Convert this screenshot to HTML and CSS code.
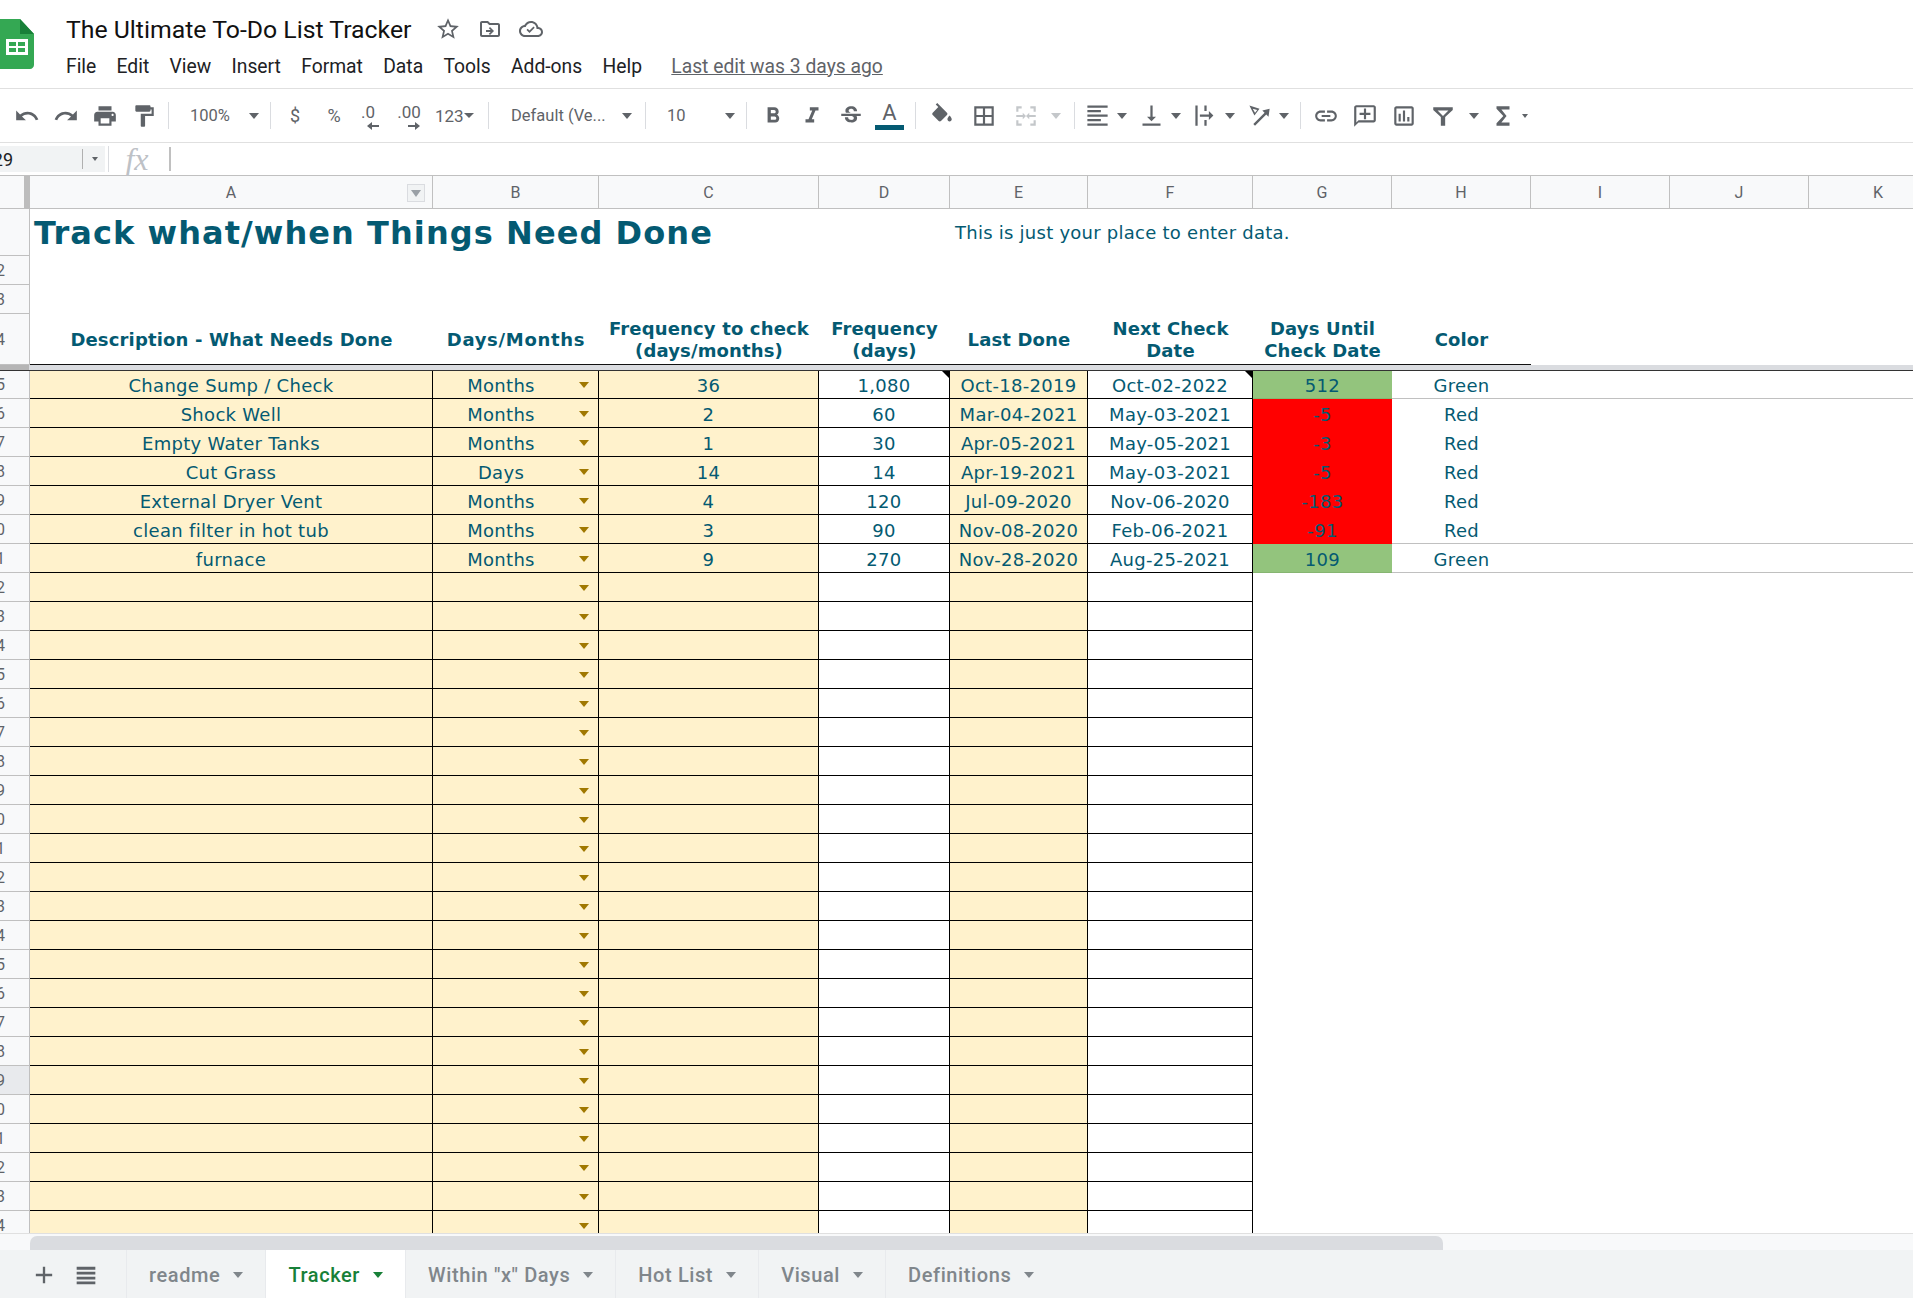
FILE: index.html
```html
<!DOCTYPE html>
<html lang="en">
<head>
    <meta charset="UTF-8">
    <title>The Ultimate To-Do List Tracker</title>
    <link rel="stylesheet" href="styles.css">
</head>
<body>

    <header class="titlebar">
        <svg class="logo" viewBox="14 0 34 50">
            <path fill="#34a853" d="M3 0h31l14 15v31c0 2-2 4-4 4H3c-2 0-3-2-3-4V3c0-2 1-3 3-3z"/>
            <path fill="#188038" d="M34 0l14 15H34z"/>
            <path fill="#fff" d="M20 20h22v16H20z"/>
            <path fill="#34a853" d="M23 23h7v4h-7zM32 23h7v4h-7zM23 29h7v4h-7zM32 29h7v4h-7z"/>
        </svg>
        <div class="doc">
            <div class="doc-name">
                <span class="doc-title">The Ultimate To-Do List Tracker</span>
                <svg class="doc-icon star" viewBox="0 0 24 24"><path d="M22 9.24l-7.19-.62L12 2 9.19 8.63 2 9.24l5.46 4.73L5.82 21 12 17.27 18.18 21l-1.63-7.03L22 9.24zM12 15.4l-3.76 2.27 1-4.28-3.32-2.88 4.38-.38L12 6.1l1.71 4.04 4.38.38-3.32 2.88 1 4.28L12 15.4z"/></svg>
                <svg class="doc-icon" viewBox="0 0 24 24"><path d="M20 6h-8l-2-2H4c-1.1 0-2 .9-2 2v12c0 1.1.9 2 2 2h16c1.1 0 2-.9 2-2V8c0-1.1-.9-2-2-2zm0 12H4V6h5.17l2 2H20v10zM12 18l4-4-4-4-1.2 1.2 1.9 1.9H8v1.8h4.7l-1.9 1.9z"/></svg>
                <svg class="doc-icon" viewBox="0 0 24 24"><path d="M19.35 10.04C18.67 6.59 15.64 4 12 4 9.11 4 6.6 5.64 5.35 8.04 2.34 8.36 0 10.91 0 14c0 3.31 2.69 6 6 6h13c2.76 0 5-2.24 5-5 0-2.64-2.05-4.78-4.65-4.96zM19 18H6c-2.21 0-4-1.79-4-4s1.79-4 4-4h.71C7.37 7.69 9.48 6 12 6c3.04 0 5.5 2.46 5.5 5.5v.5H19c1.66 0 3 1.34 3 3s-1.34 3-3 3zM10.5 16l-3-3 1.2-1.2 1.8 1.8 4-4 1.2 1.2z"/></svg>
            </div>
            <nav class="menu">
                <span>File</span>
                <span>Edit</span>
                <span>View</span>
                <span>Insert</span>
                <span>Format</span>
                <span>Data</span>
                <span>Tools</span>
                <span>Add-ons</span>
                <span>Help</span>
                <a class="last-edit">Last edit was 3 days ago</a>
            </nav>
        </div>
    </header>

    <div class="toolbar">
        <span class="tb"><svg viewBox="0 0 24 24"><path d="M12.5 8c-2.65 0-5.05.99-6.9 2.6L2 7v9h9l-3.62-3.62c1.39-1.16 3.16-1.88 5.12-1.88 3.54 0 6.55 2.31 7.6 5.5l2.37-.78C21.08 11.03 17.15 8 12.5 8z"/></svg></span>
        <span class="tb"><svg viewBox="0 0 24 24"><path d="M18.4 10.6C16.55 8.99 14.15 8 11.5 8c-4.65 0-8.58 3.03-9.96 7.22L3.9 16c1.05-3.19 4.05-5.5 7.6-5.5 1.95 0 3.73.72 5.12 1.88L13 16h9V7l-3.6 3.6z"/></svg></span>
        <span class="tb"><svg viewBox="0 0 24 24"><path d="M19 8H5c-1.66 0-3 1.34-3 3v6h4v4h12v-4h4v-6c0-1.66-1.34-3-3-3zm-3 11H8v-5h8v5zm3-7c-.55 0-1-.45-1-1s.45-1 1-1 1 .45 1 1-.45 1-1 1zm-1-9H6v4h12V3z"/></svg></span>
        <span class="tb"><svg viewBox="0 0 24 24"><path d="M18 4V3c0-.55-.45-1-1-1H5c-.55 0-1 .45-1 1v4c0 .55.45 1 1 1h12c.55 0 1-.45 1-1V6h1v4H9v11c0 .55.45 1 1 1h2c.55 0 1-.45 1-1v-9h8V4h-3z"/></svg></span>
        <i class="sep sep-paint"></i>
        <span class="tb-drop drop-zoom"><span>100%</span><i class="caret"></i></span>
        <i class="sep"></i>
        <span class="tb tb-text w-dollar">$</span>
        <span class="tb tb-text w-percent">%</span>
        <span class="tb tb-dec w-dec0">.0<svg viewBox="0 0 12 8"><path d="M12 3H5V0L0 4l5 4V5h7z"/></svg></span>
        <span class="tb tb-dec w-dec00">.00<svg viewBox="0 0 12 8"><path d="M0 3h7V0l5 4-5 4V5H0z"/></svg></span>
        <span class="tb-drop drop-num"><span>123</span><i class="caret caret-sm"></i></span>
        <i class="sep sep-num"></i>
        <span class="tb-drop drop-font"><span>Default (Ve...</span><i class="caret"></i></span>
        <i class="sep"></i>
        <span class="tb-drop drop-size"><span>10</span><i class="caret"></i></span>
        <i class="sep"></i>
        <span class="tb m-bold"><svg viewBox="0 0 24 24"><path d="M15.6 10.79c.97-.67 1.65-1.77 1.65-2.79 0-2.26-1.75-4-4-4H7v14h7.04c2.09 0 3.71-1.7 3.71-3.79 0-1.52-.86-2.82-2.15-3.42zM10 6.5h3c.83 0 1.5.67 1.5 1.5s-.67 1.5-1.5 1.5h-3v-3zm3.5 9H10v-3h3.5c.83 0 1.5.67 1.5 1.5s-.67 1.5-1.5 1.5z"/></svg></span>
        <span class="tb"><svg viewBox="0 0 24 24"><path d="M10 4v3h2.21l-3.42 8H6v3h8v-3h-2.21l3.42-8H18V4z"/></svg></span>
        <span class="tb"><svg viewBox="0 0 24 24"><path d="M7.24 8.75c-.26-.48-.39-1.03-.39-1.67 0-.61.13-1.16.4-1.67.26-.5.63-.93 1.11-1.29.48-.35 1.05-.63 1.7-.83.66-.19 1.39-.29 2.18-.29.81 0 1.54.11 2.21.34.66.22 1.23.54 1.69.94.47.4.83.88 1.08 1.43.25.55.38 1.15.38 1.81h-3.01c0-.31-.05-.59-.15-.85-.09-.27-.24-.49-.44-.68-.2-.19-.45-.33-.75-.44-.3-.1-.66-.16-1.06-.16-.39 0-.74.04-1.03.13-.29.09-.53.21-.72.36-.19.16-.34.34-.44.55-.1.21-.15.43-.15.66 0 .48.25.88.74 1.21.38.25.77.48 1.41.7H7.39c-.05-.08-.11-.17-.15-.25zM21 12v-2H3v2h9.62c.18.07.4.14.55.2.37.17.66.34.87.51.21.17.35.36.43.57.07.2.11.43.11.69 0 .23-.05.45-.14.66-.09.2-.23.38-.42.53-.19.15-.42.26-.71.35-.29.08-.63.13-1.01.13-.43 0-.83-.04-1.18-.13s-.66-.23-.91-.42c-.25-.19-.45-.44-.59-.75-.14-.31-.25-.76-.25-1.21H6.4c0 .55.08 1.13.24 1.58.16.45.37.85.65 1.21.28.35.6.66.98.92.37.26.78.48 1.22.65.44.17.9.3 1.38.39.48.08.96.13 1.44.13.8 0 1.53-.09 2.18-.28s1.21-.45 1.67-.79c.46-.34.82-.77 1.07-1.27s.38-1.07.38-1.71c0-.6-.1-1.14-.31-1.61-.05-.11-.11-.23-.17-.33H21z"/></svg></span>
        <span class="tb font-color"><span>A</span><i class="color-bar"></i></span>
        <i class="sep sep-color"></i>
        <span class="tb w-42 m-fill"><svg viewBox="0 0 24 24"><path d="M16.56 8.94L7.62 0 6.21 1.41l2.38 2.38-5.15 5.15c-.59.59-.59 1.54 0 2.12l5.5 5.5c.29.29.68.44 1.06.44s.77-.15 1.06-.44l5.5-5.5c.59-.58.59-1.53 0-2.12zM19 11.5s-2 2.17-2 3.5c0 1.1.9 2 2 2s2-.9 2-2c0-1.33-2-3.5-2-3.5z"/></svg></span>
        <span class="tb w-42"><svg viewBox="0 0 24 24"><path d="M3 3v18h18V3H3zm8 16H5v-6h6v6zm0-8H5V5h6v6zm8 8h-6v-6h6v6zm0-8h-6V5h6v6z"/></svg></span>
        <span class="tb w-42 off"><svg viewBox="0 0 24 24"><path d="M3 3h5v2H5v3H3zM16 3h5v5h-2V5h-3zM3 16h2v3h3v2H3zM19 16h2v5h-5v-2h3zM3 11h6V9l3 3-3 3v-2H3zM21 11h-6V9l-3 3 3 3v-2h6z"/></svg></span>
        <span class="caret-box off"><i class="caret"></i></span>
        <i class="sep sep-merge"></i>
        <span class="pair"><svg viewBox="0 0 24 24"><path d="M3 3h18v2H3zM3 7h12v2H3zM3 11h18v2H3zM3 15h12v2H3zM3 19h18v2H3z"/></svg><i class="caret"></i></span>
        <span class="pair"><svg viewBox="0 0 24 24"><path d="M16 13h-3V3h-2v10H8l4 4 4-4zM4 19v2h16v-2H4z"/></svg><i class="caret"></i></span>
        <span class="pair"><svg viewBox="0 0 24 24"><path d="M3 3h2v18H3zM11 3h2v5h-2zM11 16h2v5h-2zM7 11h8V8l4 4-4 4v-3H7z"/></svg><i class="caret"></i></span>
        <span class="pair"><svg viewBox="0 0 24 24"><path d="M3 3l9 3-4.500 6L3 3zm3 3l2 3.500L10 7zM21 6l-1 7-2-2L8 21l-1.500-1.500 10-10-2-2z"/></svg><i class="caret"></i></span>
        <i class="sep sep-merge"></i>
        <span class="tb m-link"><svg viewBox="0 0 24 24"><path d="M3.9 12c0-1.71 1.39-3.1 3.1-3.1h4V7H7c-2.76 0-5 2.24-5 5s2.24 5 5 5h4v-1.9H7c-1.71 0-3.1-1.39-3.1-3.1zM8 13h8v-2H8v2zm9-6h-4v1.9h4c1.71 0 3.1 1.39 3.1 3.1s-1.39 3.1-3.1 3.1h-4V17h4c2.76 0 5-2.24 5-5s-2.24-5-5-5z"/></svg></span>
        <span class="tb"><svg viewBox="0 0 24 24"><path d="M20 2H4c-1.1 0-2 .9-2 2v18l4-4h14c1.1 0 2-.9 2-2V4c0-1.1-.9-2-2-2zm0 14H6l-2 2V4h16v12zM13 5h-2v4H7v2h4v4h2v-4h4V9h-4z"/></svg></span>
        <span class="tb"><svg viewBox="0 0 24 24"><path d="M19 3H5c-1.1 0-2 .9-2 2v14c0 1.1.9 2 2 2h14c1.1 0 2-.9 2-2V5c0-1.1-.9-2-2-2zm0 16H5V5h14v14zM7 10h2v7H7zm4-3h2v10h-2zm4 6h2v4h-2z"/></svg></span>
        <span class="tb"><svg viewBox="0 0 24 24"><path d="M3 4h18v2.500L14 13v8h-4v-8L3 6.500zM7 7l5 5 5-5z" fill-rule="evenodd"/></svg></span>
        <span class="caret-box m-filter"><i class="caret"></i></span>
        <span class="tb"><svg viewBox="0 0 24 24"><path d="M18 3H6v2.200l6.300 6.800L6 18.800V21h12v-3h-7.500l4.800-6-4.800-6H18z"/></svg></span>
        <i class="caret caret-xs"></i>
    </div>

    <div class="formula">
        <div class="name-box"><span class="name-value">29</span><i class="name-div"></i><i class="caret caret-xs"></i></div>
        <i class="fx-sep"></i>
        <span class="fx">fx</span>
        <i class="fx-cursor"></i>
    </div>

    <main class="sheet">
        <div class="row col-heads">
            <div class="corner"></div>
            <div class="ch ch-a">A<i class="filter-btn"><i class="caret caret-xs"></i></i></div>
            <div class="ch">B</div>
            <div class="ch">C</div>
            <div class="ch">D</div>
            <div class="ch">E</div>
            <div class="ch">F</div>
            <div class="ch">G</div>
            <div class="ch">H</div>
            <div class="ch">I</div>
            <div class="ch">J</div>
            <div class="ch">K</div>
        </div>

        <div class="row row-1">
            <div class="rh"></div>
            <div class="title">Track what/when Things Need Done</div>
            <div></div><div></div><div></div>
            <div class="note-text">This is just your place to enter data.</div>
        </div>
        <div class="row row-2"><div class="rh"><span>2</span></div></div>
        <div class="row row-2"><div class="rh"><span>3</span></div></div>
        <div class="row row-4">
            <div class="rh"><span>4</span></div>
            <div class="hd">Description - What Needs Done</div>
            <div class="hd hd-wide">Days/Months</div>
            <div class="hd">Frequency to check<br>(days/months)</div>
            <div class="hd">Frequency<br>(days)</div>
            <div class="hd">Last Done</div>
            <div class="hd">Next Check<br>Date</div>
            <div class="hd">Days Until<br>Check Date</div>
            <div class="hd">Color</div>
        </div>
        <div class="row band"><div class="rh"></div></div>

        <div class="row first line">
            <div class="rh"><span>5</span></div>
            <div class="c y">Change Sump / Check</div>
            <div class="c y dd">Months</div>
            <div class="c y">36</div>
            <div class="c has-note">1,080</div>
            <div class="c y">Oct-18-2019</div>
            <div class="c has-note">Oct-02-2022</div>
            <div class="c good">512</div>
            <div class="c plain"><span>Green</span></div>
        </div>
        <div class="row">
            <div class="rh"><span>6</span></div>
            <div class="c y">Shock Well</div>
            <div class="c y dd">Months</div>
            <div class="c y">2</div>
            <div class="c">60</div>
            <div class="c y">Mar-04-2021</div>
            <div class="c">May-03-2021</div>
            <div class="c bad">-5</div>
            <div class="c plain"><span>Red</span></div>
        </div>
        <div class="row">
            <div class="rh"><span>7</span></div>
            <div class="c y">Empty Water Tanks</div>
            <div class="c y dd">Months</div>
            <div class="c y">1</div>
            <div class="c">30</div>
            <div class="c y">Apr-05-2021</div>
            <div class="c">May-05-2021</div>
            <div class="c bad">-3</div>
            <div class="c plain"><span>Red</span></div>
        </div>
        <div class="row">
            <div class="rh"><span>8</span></div>
            <div class="c y">Cut Grass</div>
            <div class="c y dd">Days</div>
            <div class="c y">14</div>
            <div class="c">14</div>
            <div class="c y">Apr-19-2021</div>
            <div class="c">May-03-2021</div>
            <div class="c bad">-5</div>
            <div class="c plain"><span>Red</span></div>
        </div>
        <div class="row">
            <div class="rh"><span>9</span></div>
            <div class="c y">External Dryer Vent</div>
            <div class="c y dd">Months</div>
            <div class="c y">4</div>
            <div class="c">120</div>
            <div class="c y">Jul-09-2020</div>
            <div class="c">Nov-06-2020</div>
            <div class="c bad">-183</div>
            <div class="c plain"><span>Red</span></div>
        </div>
        <div class="row line">
            <div class="rh"><span>10</span></div>
            <div class="c y">clean filter in hot tub</div>
            <div class="c y dd">Months</div>
            <div class="c y">3</div>
            <div class="c">90</div>
            <div class="c y">Nov-08-2020</div>
            <div class="c">Feb-06-2021</div>
            <div class="c bad">-91</div>
            <div class="c plain"><span>Red</span></div>
        </div>
        <div class="row line">
            <div class="rh"><span>11</span></div>
            <div class="c y">furnace</div>
            <div class="c y dd">Months</div>
            <div class="c y">9</div>
            <div class="c">270</div>
            <div class="c y">Nov-28-2020</div>
            <div class="c">Aug-25-2021</div>
            <div class="c good">109</div>
            <div class="c plain"><span>Green</span></div>
        </div>

        <div class="row"><div class="rh"><span>12</span></div><div class="c y"></div><div class="c y dd"></div><div class="c y"></div><div class="c"></div><div class="c y"></div><div class="c"></div></div>
        <div class="row"><div class="rh"><span>13</span></div><div class="c y"></div><div class="c y dd"></div><div class="c y"></div><div class="c"></div><div class="c y"></div><div class="c"></div></div>
        <div class="row"><div class="rh"><span>14</span></div><div class="c y"></div><div class="c y dd"></div><div class="c y"></div><div class="c"></div><div class="c y"></div><div class="c"></div></div>
        <div class="row"><div class="rh"><span>15</span></div><div class="c y"></div><div class="c y dd"></div><div class="c y"></div><div class="c"></div><div class="c y"></div><div class="c"></div></div>
        <div class="row"><div class="rh"><span>16</span></div><div class="c y"></div><div class="c y dd"></div><div class="c y"></div><div class="c"></div><div class="c y"></div><div class="c"></div></div>
        <div class="row"><div class="rh"><span>17</span></div><div class="c y"></div><div class="c y dd"></div><div class="c y"></div><div class="c"></div><div class="c y"></div><div class="c"></div></div>
        <div class="row"><div class="rh"><span>18</span></div><div class="c y"></div><div class="c y dd"></div><div class="c y"></div><div class="c"></div><div class="c y"></div><div class="c"></div></div>
        <div class="row"><div class="rh"><span>19</span></div><div class="c y"></div><div class="c y dd"></div><div class="c y"></div><div class="c"></div><div class="c y"></div><div class="c"></div></div>
        <div class="row"><div class="rh"><span>20</span></div><div class="c y"></div><div class="c y dd"></div><div class="c y"></div><div class="c"></div><div class="c y"></div><div class="c"></div></div>
        <div class="row"><div class="rh"><span>21</span></div><div class="c y"></div><div class="c y dd"></div><div class="c y"></div><div class="c"></div><div class="c y"></div><div class="c"></div></div>
        <div class="row"><div class="rh"><span>22</span></div><div class="c y"></div><div class="c y dd"></div><div class="c y"></div><div class="c"></div><div class="c y"></div><div class="c"></div></div>
        <div class="row"><div class="rh"><span>23</span></div><div class="c y"></div><div class="c y dd"></div><div class="c y"></div><div class="c"></div><div class="c y"></div><div class="c"></div></div>
        <div class="row"><div class="rh"><span>24</span></div><div class="c y"></div><div class="c y dd"></div><div class="c y"></div><div class="c"></div><div class="c y"></div><div class="c"></div></div>
        <div class="row"><div class="rh"><span>25</span></div><div class="c y"></div><div class="c y dd"></div><div class="c y"></div><div class="c"></div><div class="c y"></div><div class="c"></div></div>
        <div class="row"><div class="rh"><span>26</span></div><div class="c y"></div><div class="c y dd"></div><div class="c y"></div><div class="c"></div><div class="c y"></div><div class="c"></div></div>
        <div class="row"><div class="rh"><span>27</span></div><div class="c y"></div><div class="c y dd"></div><div class="c y"></div><div class="c"></div><div class="c y"></div><div class="c"></div></div>
        <div class="row"><div class="rh"><span>28</span></div><div class="c y"></div><div class="c y dd"></div><div class="c y"></div><div class="c"></div><div class="c y"></div><div class="c"></div></div>
        <div class="row"><div class="rh active"><span>29</span></div><div class="c y"></div><div class="c y dd"></div><div class="c y"></div><div class="c"></div><div class="c y"></div><div class="c"></div></div>
        <div class="row"><div class="rh"><span>30</span></div><div class="c y"></div><div class="c y dd"></div><div class="c y"></div><div class="c"></div><div class="c y"></div><div class="c"></div></div>
        <div class="row"><div class="rh"><span>31</span></div><div class="c y"></div><div class="c y dd"></div><div class="c y"></div><div class="c"></div><div class="c y"></div><div class="c"></div></div>
        <div class="row"><div class="rh"><span>32</span></div><div class="c y"></div><div class="c y dd"></div><div class="c y"></div><div class="c"></div><div class="c y"></div><div class="c"></div></div>
        <div class="row"><div class="rh"><span>33</span></div><div class="c y"></div><div class="c y dd"></div><div class="c y"></div><div class="c"></div><div class="c y"></div><div class="c"></div></div>
        <div class="row"><div class="rh"><span>34</span></div><div class="c y"></div><div class="c y dd"></div><div class="c y"></div><div class="c"></div><div class="c y"></div><div class="c"></div></div>
    </main>

    <div class="scrollbar"><div class="thumb"></div></div>

    <footer class="tabbar">
        <div class="tab-tools">
            <svg viewBox="0 0 24 24"><path d="M19 13h-6v6h-2v-6H5v-2h6V5h2v6h6z"/></svg>
            <svg viewBox="0 0 24 24"><path d="M4 5h16v2.400H4zM4 9.200h16v2.400H4zM4 13.400h16v2.400H4zM4 17.600h16V20H4z"/></svg>
        </div>
        <div class="tab">readme<i class="caret"></i></div>
        <div class="tab active">Tracker<i class="caret"></i></div>
        <div class="tab">Within "x" Days<i class="caret"></i></div>
        <div class="tab">Hot List<i class="caret"></i></div>
        <div class="tab">Visual<i class="caret"></i></div>
        <div class="tab">Definitions<i class="caret"></i></div>
    </footer>

</body>
</html>
```

FILE: styles.css
```css
body {
    margin: 0;
    width: 1913px;
    height: 1298px;
    overflow: hidden;
    display: flex;
    flex-direction: column;
    font-family: 'Roboto', sans-serif;
    background-color: white;
}

/* title bar */
.titlebar {
    height: 88px;
    flex: none;
    display: flex;
    border-bottom: 1px solid #e0e0e0;
}

.logo {
    width: 34px;
    height: 50px;
    margin-top: 19px;
    flex: none;
}

.doc {
    margin-left: 32px;
}

.doc-name {
    display: flex;
    align-items: center;
    height: 38px;
    margin-top: 10px;
}

.doc-title {
    font-size: 24.8px;
    color: #111;
    width: 369px;
    white-space: nowrap;
}

.doc-icon {
    width: 24px;
    height: 24px;
    margin-right: 17px;
    fill: #5f6368;
}

.doc-icon.star {
    width: 26px;
    height: 26px;
}

.menu {
    display: flex;
    align-items: center;
    gap: 20.3px;
    height: 30px;
    margin-top: 3px;
    font-size: 19.3px;
    color: #202124;
}

.last-edit {
    margin-left: 9px;
    color: #5f6368;
    text-decoration: underline;
}

/* toolbar */
.toolbar {
    height: 53px;
    flex: none;
    display: flex;
    align-items: center;
    padding-left: 7px;
    border-bottom: 1px solid #e0e0e0;
    color: #5f6368;
}

.toolbar svg {
    fill: #5f6368;
}

.tb {
    width: 39px;
    height: 36px;
    flex: none;
    display: flex;
    align-items: center;
    justify-content: center;
}

.tb svg {
    width: 26px;
    height: 26px;
}

.tb-text {
    font-size: 18px;
}

.tb-dec {
    flex-direction: column;
    font-size: 17px;
    line-height: 20px;
}

.tb-dec svg {
    width: 12px;
    height: 8px;
    margin-left: 10px;
}

.w-dollar { width: 48px; }
.w-percent { width: 30px; }
.w-dec0 { width: 38px; }
.w-dec00 { width: 44px; }
.w-42 { width: 42px; }
.m-bold { margin-left: 6px; }
.m-fill { margin-left: 5px; }
.m-link { margin-left: 5px; }
.m-filter { margin-left: 3px; }

.off svg {
    fill: #c4c7ca;
}

.off .caret {
    border-top-color: #c4c7ca;
}

.tb-drop {
    flex: none;
    box-sizing: border-box;
    display: flex;
    align-items: center;
    justify-content: space-between;
    font-size: 16.5px;
}

.drop-zoom { width: 101px; padding: 0 11px 0 21px; }
.drop-num { width: 54px; padding: 0 13px 0 4px; font-size: 17px; }
.drop-font { width: 156px; padding: 0 13px 0 22px; }
.drop-size { width: 100px; padding: 0 11px 0 21px; }

.pair {
    width: 47px;
    padding-left: 7px;
    flex: none;
    display: flex;
    align-items: center;
}

.pair svg {
    width: 27px;
    height: 27px;
    margin: 0 6px 0 2px;
}

.caret-box {
    width: 18px;
    flex: none;
    display: flex;
    justify-content: center;
}

.caret {
    display: inline-block;
    width: 0;
    height: 0;
    border-left: 5.5px solid transparent;
    border-right: 5.5px solid transparent;
    border-top: 6px solid #5f6368;
}

.caret-sm {
    border-left-width: 5px;
    border-right-width: 5px;
    border-top-width: 5px;
}

.caret-xs {
    border-left-width: 3.5px;
    border-right-width: 3.5px;
    border-top-width: 4px;
}

.sep {
    width: 1px;
    height: 27px;
    flex: none;
    background-color: #dadce0;
}

.sep-paint { margin-left: 5px; }
.sep-num { margin-left: 3px; }
.sep-color { margin-left: 6px; }
.sep-merge { margin-left: 9px; }

.font-color {
    flex-direction: column;
    font-size: 22px;
    line-height: 24px;
}

.color-bar {
    width: 29px;
    height: 5px;
    background-color: #045a72;
}

/* formula bar */
.formula {
    height: 32px;
    flex: none;
    display: flex;
    align-items: center;
    border-bottom: 1px solid #c0c0c0;
}

.name-box {
    width: 105px;
    height: 26px;
    display: flex;
    align-items: center;
    background-color: #f1f3f4;
    font-size: 18px;
    color: #202124;
}

.name-value {
    width: 13px;
    flex: none;
    display: flex;
    justify-content: flex-end;
}

.name-box .name-div {
    width: 1px;
    height: 20px;
    margin: 0 9px 0 69px;
    background-color: #b0b0b0;
}

.fx-sep {
    width: 1px;
    height: 26px;
    margin-left: 3px;
    background-color: #dadce0;
}

.fx {
    width: 56px;
    padding-right: 4px;
    text-align: center;
    font-family: 'Liberation Serif', serif;
    font-style: italic;
    font-size: 32px;
    color: #bdc1c6;
}

.fx-cursor {
    width: 2px;
    height: 24px;
    background-color: #c0c0c0;
}

/* sheet */
.sheet {
    height: 1057px;
    flex: none;
    overflow: hidden;
    font-family: 'DejaVu Sans', sans-serif;
    font-size: 18px;
    letter-spacing: 0.3px;
    color: #045a72;
}

.row {
    display: grid;
    grid-template-columns: 30px 403px 166px 220px 131px 138px 165px 139px 139px 139px 139px 139px;
    height: 29px;
    white-space: nowrap;
}

.col-heads {
    height: 33px;
    font-family: 'Roboto', sans-serif;
    font-size: 16px;
    letter-spacing: 0;
    color: #5f6368;
}

.corner {
    background-color: #f8f9fa;
    border-right: 6px solid #bdbdbd;
    border-bottom: 1px solid #c0c0c0;
}

.ch {
    position: relative;
    display: flex;
    align-items: center;
    justify-content: center;
    background-color: #f8f9fa;
    border-right: 1px solid #c0c0c0;
    border-bottom: 1px solid #c0c0c0;
}

.filter-btn {
    position: absolute;
    right: 7px;
    top: 8px;
    width: 16px;
    height: 16px;
    display: flex;
    align-items: center;
    justify-content: center;
    border: 1px solid #dadce0;
    background-color: #f1f3f4;
}

.filter-btn .caret {
    border-top-color: #9aa0a6;
    border-left-width: 5px;
    border-right-width: 5px;
    border-top-width: 7px;
}

.rh {
    display: flex;
    align-items: center;
    justify-content: flex-end;
    width: 5px;
    padding-right: 24px;
    font-family: 'Roboto', sans-serif;
    font-size: 16px;
    letter-spacing: 0;
    color: #5f6368;
    background-color: #f8f9fa;
    border-right: 1px solid #c0c0c0;
    border-bottom: 1px solid #c0c0c0;
}

.rh.active {
    background-color: #e8eaed;
}

.row-1 {
    height: 47px;
}

.title {
    display: flex;
    align-items: center;
    padding-left: 4px;
    font-size: 32px;
    letter-spacing: 1.07px;
    font-weight: bold;
}

.note-text {
    display: flex;
    align-items: center;
    padding-left: 5px;
    letter-spacing: 0.25px;
}

.row-4 {
    height: 51px;
}

.hd {
    display: flex;
    align-items: center;
    justify-content: center;
    padding-top: 1px;
    text-align: center;
    font-weight: bold;
    letter-spacing: 0.15px;
    line-height: 22px;
    border-bottom: 1px solid #111;
}

.hd-wide {
    letter-spacing: 0.7px;
}

.band {
    height: 5px;
    background-color: #dadce0;
}

.band .rh {
    background-color: #b5b5b5;
    border: none;
}

.first {
    border-top: 1px solid #333;
    height: 28px;
}

.c {
    position: relative;
    display: flex;
    align-items: center;
    justify-content: center;
    padding-top: 2px;
    border-right: 1px solid #000;
    border-bottom: 1px solid #000;
}

.y {
    background-color: #fff2cc;
}

.dd {
    padding-right: 29px;
}

.dd::after {
    content: '';
    position: absolute;
    top: 12px;
    right: 9px;
    border-left: 5.5px solid transparent;
    border-right: 5.5px solid transparent;
    border-top: 6px solid #a07800;
}

.first .dd::after {
    top: 11px;
}

.has-note::after {
    content: '';
    position: absolute;
    top: 0;
    right: 0;
    border-left: 7px solid transparent;
    border-top: 7px solid #000;
}

.good {
    background-color: #93c47d;
    border-right: none;
    border-bottom: 1px solid #86b571;
}

.bad {
    background-color: #ff0000;
    border: none;
}

.plain {
    grid-column: span 4;
    justify-content: flex-start;
    border: none;
}

.plain span {
    width: 139px;
    text-align: center;
}

.line .plain {
    border-bottom: 1px solid #c0c0c0;
}

/* scrollbar */
.scrollbar {
    height: 14px;
    flex: none;
    padding: 2px 0 0 30px;
    background-color: #f8f9fa;
    border-top: 1px solid #e0e0e0;
}

.thumb {
    width: 1413px;
    height: 14px;
    border-radius: 7px 7px 0 0;
    background-color: #dadce0;
}

/* sheet tabs */
.tabbar {
    height: 49px;
    flex: none;
    display: flex;
    align-items: stretch;
    background-color: #f1f3f4;
    font-size: 20px;
    letter-spacing: 0.6px;
    font-weight: 500;
    color: #80868b;
}

.tab-tools {
    width: 126px;
    display: flex;
    align-items: center;
    gap: 14px;
    padding-left: 30px;
    box-sizing: border-box;
}

.tab-tools svg {
    width: 28px;
    height: 28px;
    fill: #5f6368;
}

.tab {
    display: flex;
    align-items: center;
    gap: 13px;
    padding: 0 22px;
    border-left: 1px solid #e8eaed;
}

.tab .caret {
    border-top-color: #80868b;
}

.tab.active {
    background-color: white;
    color: #188038;
}

.tab.active .caret {
    border-top-color: #188038;
}
```
